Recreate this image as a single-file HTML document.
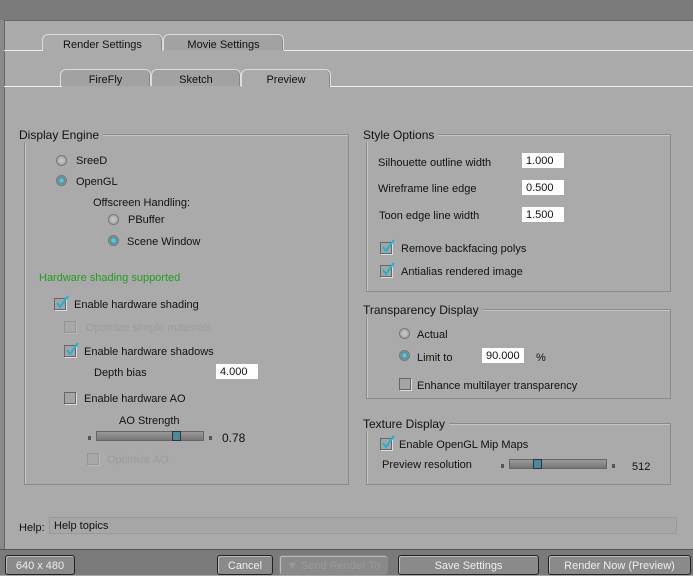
<html><head><style>
body{margin:0;width:693px;height:575px;background:#aaa;font-family:"Liberation Sans",sans-serif;font-size:11px;color:#111;position:relative;overflow:hidden}
div,span,svg{position:absolute;box-sizing:border-box}
.t{white-space:nowrap;margin-top:1px}
.tab{border:1px solid #ddd;border-bottom:none;border-radius:6px 6px 0 0;text-align:center;line-height:16px;box-shadow:-1px 0 0 #888 inset}
.grp{border:1px solid #8a8a8a;box-shadow:1px 1px 0 #c4c4c4 inset}
.lbl{background:#aaa;padding:0 4px 0 0;font-size:12px;line-height:14px}
.in{background:#fff;height:15px;line-height:16px;padding-left:4px;width:42px}
.cb{width:12px;height:12px;border:1px solid #666;background:#a4a4a4;box-shadow:1px 1px 0 #ddd}
.ck{left:0;top:-4px;overflow:visible}
.rd{width:11px;height:11px;border-radius:50%;border:1px solid #777;background:radial-gradient(#ccc,#999)}
.rd.on{background:radial-gradient(#3ad0f0 30%,#588 45%,#999 70%)}
.btn{border:1px solid #222;border-radius:3px;background:#8a8a8a;color:#eee;text-align:center;line-height:18px;height:20px;top:555px;box-shadow:1px 1px 0 #bbb inset}
</style></head><body>
<div style="left:0;top:0;width:693px;height:20px;background:#7a7a7a"></div>
<div style="left:0;top:20px;width:4px;height:530px;background:#8a8a8a"></div>
<div style="left:4px;top:20px;width:1px;height:530px;background:#666"></div>
<div style="left:4px;top:20px;width:690px;height:1px;background:#666"></div>
<div style="left:4px;top:50px;width:40px;height:1px;background:#eee"></div>
<div style="left:284px;top:50px;width:409px;height:1px;background:#eee"></div>
<div class="tab" style="left:42px;top:34px;width:121px;height:17px;background:#ababab;padding-top:2px">Render Settings</div>
<div class="tab" style="left:163px;top:34px;width:121px;height:16px;background:#a2a2a2;padding-top:2px">Movie Settings</div>
<div style="left:4px;top:86px;width:58px;height:1px;background:#eee"></div>
<div style="left:331px;top:86px;width:362px;height:1px;background:#eee"></div>
<div class="tab" style="left:60px;top:69px;width:91px;height:17px;background:#a2a2a2;padding-top:2px">FireFly</div>
<div class="tab" style="left:151px;top:69px;width:90px;height:17px;background:#a2a2a2;padding-top:2px">Sketch</div>
<div class="tab" style="left:241px;top:69px;width:90px;height:18px;background:#aaa;padding-top:2px">Preview</div>

<div class="grp" style="left:24px;top:134px;width:325px;height:351px"></div>
<div class="lbl t" style="left:19px;top:127px">Display Engine</div>
<div class="rd" style="left:56px;top:155px"></div><div class="t" style="left:76px;top:154px">SreeD</div>
<div class="rd on" style="left:56px;top:175px"></div><div class="t" style="left:76px;top:175px">OpenGL</div>
<div class="t" style="left:93px;top:196px">Offscreen Handling:</div>
<div class="rd" style="left:108px;top:214px"></div><div class="t" style="left:128px;top:213px">PBuffer</div>
<div class="rd on" style="left:108px;top:235px"></div><div class="t" style="left:127px;top:235px">Scene Window</div>
<div class="t" style="left:39px;top:271px;color:#1fa01f">Hardware shading supported</div>
<div class="cb" style="left:54px;top:298px"><svg class="ck" width="14" height="14"><path d="M2 8 L5 12 L13 1" stroke="#18b4d8" stroke-width="2" fill="none"/></svg></div><div class="t" style="left:74px;top:298px">Enable hardware shading</div>
<div class="cb" style="left:64px;top:321px;opacity:.3"></div><div class="t" style="left:86px;top:321px;color:#9c9c9c">Optimize simple materials</div>
<div class="cb" style="left:64px;top:345px"><svg class="ck" width="14" height="14"><path d="M2 8 L5 12 L13 1" stroke="#18b4d8" stroke-width="2" fill="none"/></svg></div><div class="t" style="left:84px;top:345px">Enable hardware shadows</div>
<div class="t" style="left:94px;top:366px">Depth bias</div><div class="in" style="left:216px;top:364px">4.000</div>
<div class="cb" style="left:64px;top:392px"></div><div class="t" style="left:84px;top:392px">Enable hardware AO</div>
<div class="t" style="left:119px;top:414px">AO Strength</div>
<div style="left:88px;top:436px;width:3px;height:4px;background:#555"></div>
<div style="left:96px;top:431px;width:108px;height:10px;background:linear-gradient(#999,#777);border:1px solid #666"></div>
<div style="left:172px;top:431px;width:9px;height:10px;background:#4a8a9a;border:1px solid #333"></div>
<div style="left:209px;top:436px;width:3px;height:4px;background:#555"></div>
<div class="t" style="left:222px;top:430px;font-size:12px">0.78</div>
<div class="cb" style="left:87px;top:453px;opacity:.3"></div><div class="t" style="left:107px;top:453px;color:#9c9c9c">Optimize AO</div>

<div class="grp" style="left:366px;top:134px;width:305px;height:158px"></div>
<div class="lbl t" style="left:363px;top:127px">Style Options</div>
<div class="t" style="left:378px;top:156px">Silhouette outline width</div><div class="in" style="left:522px;top:153px">1.000</div>
<div class="t" style="left:378px;top:182px">Wireframe line edge</div><div class="in" style="left:522px;top:180px">0.500</div>
<div class="t" style="left:379px;top:209px">Toon edge line width</div><div class="in" style="left:522px;top:207px">1.500</div>
<div class="cb" style="left:380px;top:242px"><svg class="ck" width="14" height="14"><path d="M2 8 L5 12 L13 1" stroke="#18b4d8" stroke-width="2" fill="none"/></svg></div><div class="t" style="left:401px;top:242px">Remove backfacing polys</div>
<div class="cb" style="left:380px;top:265px"><svg class="ck" width="14" height="14"><path d="M2 8 L5 12 L13 1" stroke="#18b4d8" stroke-width="2" fill="none"/></svg></div><div class="t" style="left:401px;top:265px">Antialias rendered image</div>

<div class="grp" style="left:366px;top:309px;width:305px;height:90px"></div>
<div class="lbl t" style="left:363px;top:302px">Transparency Display</div>
<div class="rd" style="left:399px;top:328px"></div><div class="t" style="left:417px;top:328px">Actual</div>
<div class="rd on" style="left:399px;top:350px"></div><div class="t" style="left:417px;top:351px">Limit to</div>
<div class="in" style="left:482px;top:348px;width:42px">90.000</div><div class="t" style="left:536px;top:351px">%</div>
<div class="cb" style="left:399px;top:378px"></div><div class="t" style="left:417px;top:379px">Enhance multilayer transparency</div>

<div class="grp" style="left:366px;top:423px;width:305px;height:62px"></div>
<div class="lbl t" style="left:363px;top:416px">Texture Display</div>
<div class="cb" style="left:380px;top:438px"><svg class="ck" width="14" height="14"><path d="M2 8 L5 12 L13 1" stroke="#18b4d8" stroke-width="2" fill="none"/></svg></div><div class="t" style="left:399px;top:438px">Enable OpenGL Mip Maps</div>
<div class="t" style="left:382px;top:458px">Preview resolution</div>
<div style="left:501px;top:464px;width:3px;height:4px;background:#555"></div>
<div style="left:509px;top:459px;width:98px;height:10px;background:linear-gradient(#999,#777);border:1px solid #666"></div>
<div style="left:533px;top:459px;width:9px;height:10px;background:#4a8a9a;border:1px solid #333"></div>
<div style="left:612px;top:464px;width:3px;height:4px;background:#555"></div>
<div class="t" style="left:632px;top:460px">512</div>

<div class="t" style="left:19px;top:521px">Help:</div>
<div style="left:49px;top:517px;width:628px;height:17px;border:1px solid #999;background:#a7a7a7;line-height:17px;padding-left:4px">Help topics</div>

<div style="left:0;top:549px;width:693px;height:26px;background:#7a7a7a;border-top:1px solid #555"></div>
<div class="btn t" style="left:5px;width:70px;margin:0;line-height:20px">640 x 480</div>
<div class="btn t" style="left:217px;width:56px;margin:0;line-height:20px">Cancel</div>
<div class="btn t" style="left:279px;width:109px;color:#999;border-color:#888;margin:0;line-height:20px">▼ Send Render To</div>
<div class="btn t" style="left:398px;width:141px;margin:0;line-height:20px">Save Settings</div>
<div class="btn t" style="left:548px;width:143px;margin:0;line-height:20px">Render Now (Preview)</div>
</body></html>
